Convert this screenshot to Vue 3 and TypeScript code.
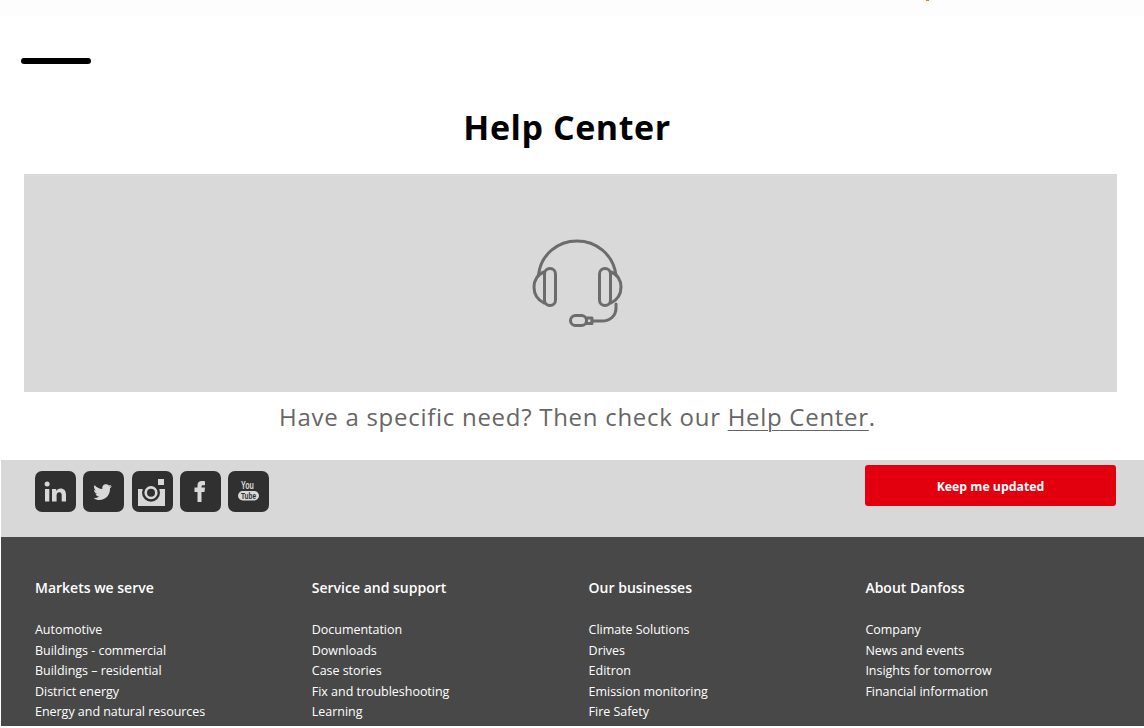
<script setup lang="ts">
const columns = [
  {
    title: 'Markets we serve',
    links: ['Automotive', 'Buildings - commercial', 'Buildings – residential', 'District energy', 'Energy and natural resources']
  },
  {
    title: 'Service and support',
    links: ['Documentation', 'Downloads', 'Case stories', 'Fix and troubleshooting', 'Learning']
  },
  {
    title: 'Our businesses',
    links: ['Climate Solutions', 'Drives', 'Editron', 'Emission monitoring', 'Fire Safety']
  },
  {
    title: 'About Danfoss',
    links: ['Company', 'News and events', 'Insights for tomorrow', 'Financial information']
  }
]
</script>

<template>
  <div class="page">
    <header class="top">
      <span class="cut-mark"></span>
      <span class="menu-bar"></span>
    </header>

    <h1 class="title">Help Center</h1>

    <div class="banner">
      <svg class="headset" width="92" height="92" viewBox="0 0 92 92" fill="none" stroke="#6c6c6c" stroke-width="3" stroke-linecap="round" stroke-linejoin="round">
        <path d="M7.500 37C10 16 27 3 46 3s36 13 39 34" />
        <rect x="13.500" y="30.500" width="11" height="37" rx="5.500" />
        <rect x="68.500" y="30.500" width="11" height="37" rx="5.500" />
        <path d="M13 34C7 36 3 42 3 49s4 13 10 16" />
        <path d="M80 34c6 2 10 8 10 15s-4 13-10 16" />
        <path d="M85 66v4c0 8-6 13-14 13H61" />
        <rect x="39.500" y="77.500" width="16" height="10" rx="5" />
        <rect x="55.500" y="80" width="5.500" height="5.500" />
      </svg>
    </div>

    <p class="need">Have a specific need? Then check our <a href="#" class="need-link">Help Center</a>.</p>

    <footer class="footer">
      <div class="social-bar">
        <div class="social">
          <a class="icon" href="#" aria-label="LinkedIn">
            <svg width="41" height="41" viewBox="0 0 41 41" fill="#d8d8d8">
              <rect x="10" y="18" width="4.300" height="12.500" />
              <circle cx="12.150" cy="13" r="2.500" />
              <path d="M17 18h4.100v2c1-1.500 2.500-2.400 4.400-2.400 3.600 0 5.500 2.200 5.500 6.200v6.700h-4.300v-6.200c0-2-.7-3.100-2.400-3.100-1.800 0-2.700 1.200-2.700 3.300v6H17z" />
            </svg>
          </a>
          <a class="icon" href="#" aria-label="Twitter">
            <svg width="41" height="41" viewBox="0 0 41 41" fill="#d8d8d8">
              <g transform="translate(1 4) scale(.82)">
                <path d="M31 14.500c1.100-.2 2.200-.6 3-1.100-.5 1.100-1.300 2-2.300 2.800 0 .3 0 .6 0 .9 0 7-5 13.400-13 13.400-2.700 0-5-.8-7-2.200 2.500.2 4.700-.5 6.600-2-2.200-.1-3.700-1.400-4.300-3.300.8.100 1.400.1 2.100-.1-2.300-.6-3.800-2.400-3.800-4.700.7.300 1.400.5 2.100.6-2.200-1.700-2.800-4.400-1.500-6.700 2.500 3 5.600 4.700 9.500 4.900-.6-3 1.500-5.600 4.500-5.600 1.300 0 2.500.5 3.400 1.500 1-.2 2-.6 2.900-1.100-.4 1.100-1.100 2-2.200 2.700z" />
              </g>
            </svg>
          </a>
          <a class="icon" href="#" aria-label="Instagram">
            <svg width="41" height="41" viewBox="0 0 41 41">
              <rect x="6" y="18" width="27" height="17" fill="#d8d8d8" />
              <circle cx="19" cy="21.700" r="9" fill="#303030" />
              <circle cx="19" cy="21.700" r="5.300" fill="none" stroke="#d8d8d8" stroke-width="2.600" />
              <rect x="26" y="8" width="6" height="6" fill="#d8d8d8" />
            </svg>
          </a>
          <a class="icon" href="#" aria-label="Facebook">
            <svg width="41" height="41" viewBox="0 0 41 41" fill="#d8d8d8">
              <path d="M17.500 31V21h-3v-4.500h3V14c0-2.800 1.800-4 4.500-4 1.200 0 2.500.1 3 .2v4h-2c-1.100 0-1.500.5-1.500 1.500v.8h3.500l-.5 4.500h-3V31z" />
            </svg>
          </a>
          <a class="icon" href="#" aria-label="YouTube">
            <svg width="41" height="41" viewBox="0 0 41 41">
              <rect x="10" y="20" width="21" height="9.500" rx="4.700" fill="#d8d8d8" />
              <text x="19.500" y="18" class="yt-you" textLength="13" lengthAdjust="spacingAndGlyphs">You</text>
              <text x="20.500" y="27.800" class="yt-tube" textLength="15" lengthAdjust="spacingAndGlyphs">Tube</text>
            </svg>
          </a>
        </div>
        <a href="#" class="update-btn">Keep me updated</a>
      </div>

      <div class="links">
        <div v-for="col in columns" :key="col.title" class="col">
          <h3 class="col-title">{{ col.title }}</h3>
          <ul class="col-list">
            <li v-for="link in col.links" :key="link"><a href="#">{{ link }}</a></li>
          </ul>
        </div>
      </div>
    </footer>
  </div>
</template>

<style>
body {
  background: #fff;
}
</style>

<style scoped>
.page {
  position: relative;
  width: 1144px;
  height: 728px;
  overflow: hidden;
  font-family: "Open Sans", "Noto Sans", sans-serif;
}

.top {
  height: 93px;
  padding: 58px 0 0 21px;
  box-sizing: border-box;
  background: linear-gradient(#fdfdfd 16px, #fff 16px);
}

/* sliver of the logo that is cut off by the top of the page */
.cut-mark {
  position: absolute;
  top: 0;
  left: 926px;
  width: 3px;
  height: 1px;
  background: #d9860a;
}

.menu-bar {
  display: block;
  width: 69.500px;
  height: 6px;
  border-radius: 3px;
  background: #000;
}

.title {
  margin: 0;
  height: 81px;
  padding-right: 10px;
  line-height: 68px;
  font-size: 34px;
  font-weight: 700;
  letter-spacing: 0.55px;
  text-align: center;
  color: #000;
}

.banner {
  margin-left: 24px;
  width: 1093px;
  height: 218px;
  background: #d9d9d9;
  display: flex;
  align-items: center;
  justify-content: center;
}

.headset {
  margin-left: 12px;
  margin-top: 2px;
}

.need {
  margin: 0;
  height: 68px;
  padding-top: 8px;
  box-sizing: border-box;
  font-size: 24px;
  line-height: 34px;
  letter-spacing: 0.72px;
  text-align: center;
  color: #666;
  padding-left: 11px;
}

.need-link {
  color: #666;
  text-decoration: underline;
  text-decoration-thickness: 1px;
  text-underline-offset: 4px;
}

.footer {
  margin-left: 1px;
  background: #c8c8c8;
}

.social-bar {
  height: 77px;
  background: #d8d8d8;
  display: flex;
  justify-content: space-between;
  align-items: flex-start;
  padding: 5px 28px 0 34px;
  box-sizing: border-box;
}

.social {
  display: flex;
  gap: 7.250px;
  margin-top: 6px;
}

.icon {
  display: block;
  width: 41px;
  height: 41px;
  border-radius: 7px;
  background: #303030;
}

.yt-you,
.yt-tube {
  font-family: "Liberation Sans", sans-serif;
  font-weight: 700;
  text-anchor: middle;
}

.yt-you {
  font-size: 10px;
  fill: #d8d8d8;
}

.yt-tube {
  font-size: 8.500px;
  fill: #303030;
}

.update-btn {
  display: block;
  width: 251px;
  height: 41px;
  line-height: 43px;
  border-radius: 3px;
  background: #e2000f;
  color: #fff;
  text-align: center;
  text-decoration: none;
  font-size: 12.300px;
  font-weight: 700;
}

.links {
  height: 189px;
  overflow: hidden;
  background: #484848;
  display: grid;
  grid-template-columns: repeat(4, 276.800px);
  padding: 40px 0 0 34px;
  box-sizing: border-box;
}

.col-title {
  margin: 0 0 21px;
  font-size: 14px;
  line-height: 22px;
  font-weight: 600;
  color: #fff;
}

.col-list {
  list-style: none;
  margin: 0;
  padding: 0;
}

.col-list li {
  height: 20.500px;
  line-height: 20.500px;
  font-size: 12.500px;
  letter-spacing: -0.03px;
}

.col-list a {
  color: #fff;
  text-decoration: none;
}
</style>
